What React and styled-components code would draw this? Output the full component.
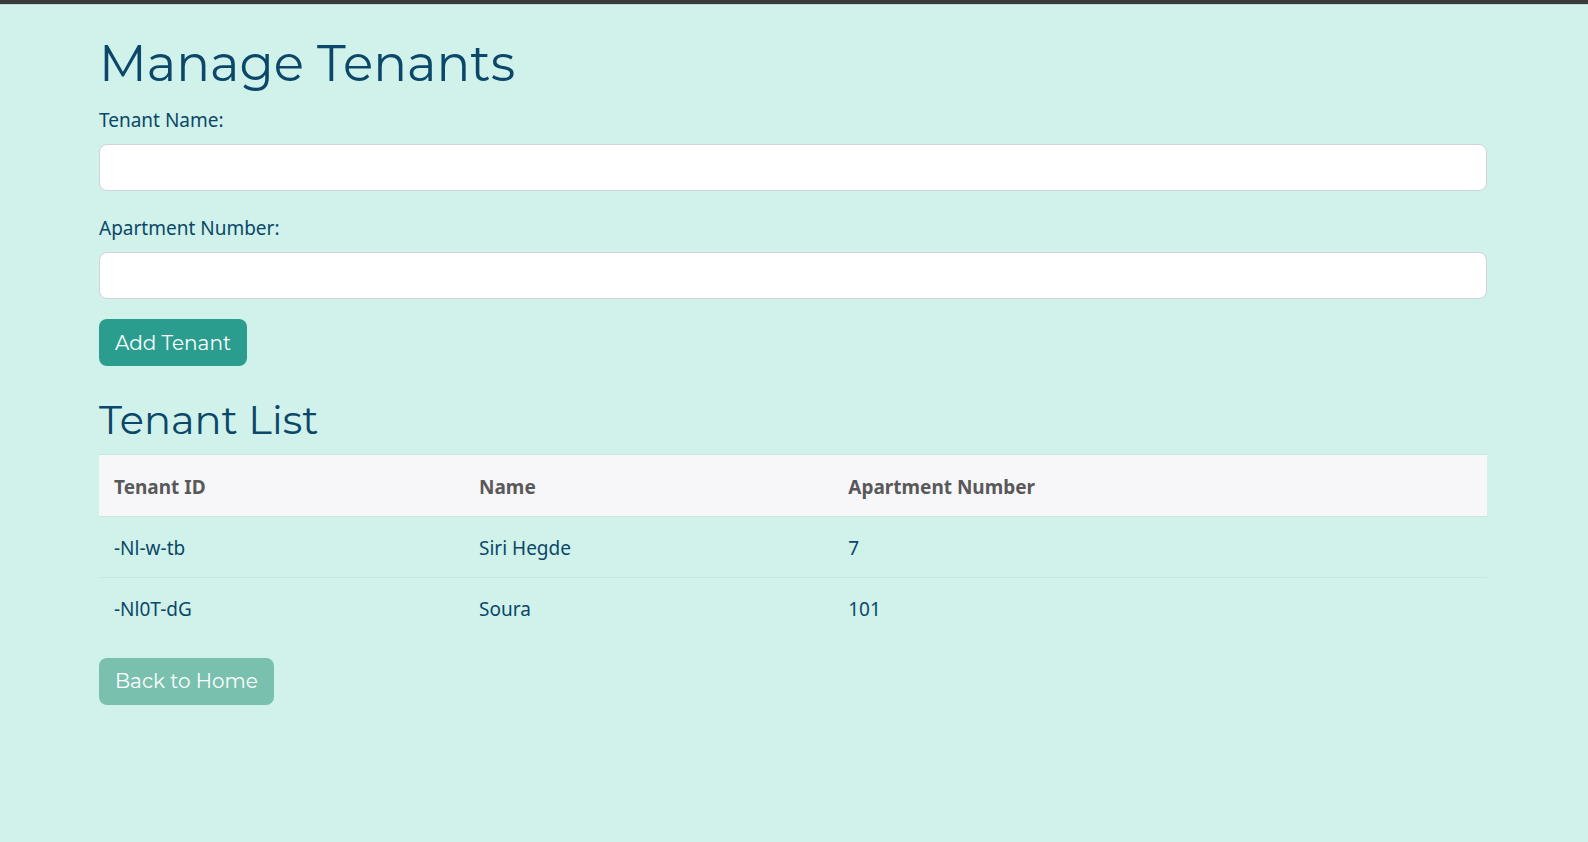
import React, { useState } from "react";
import styled, { createGlobalStyle } from "styled-components";

const GlobalStyle = createGlobalStyle`
  *, *::before, *::after { box-sizing: border-box; }
  body {
    margin: 0;
    background: #d0f2ea;
    color: #0b4769;
    font-family: "Segoe UI", "Noto Sans", sans-serif;
    font-size: 19px;
    line-height: 30px;
  }
`;

const Page = styled.div`
  min-height: 100vh;
  border-top: 4px solid #3b3b3b;
`;

const Content = styled.main`
  border-top: 1px solid #bbdad2;
  padding: 28px 101px 40px 99px;
`;

const Title = styled.h1`
  margin: 0 0 10px;
  font-family: Montserrat, Inter, sans-serif;
  font-size: 50px;
  font-weight: 400;
  line-height: 62px;
`;

const Subtitle = styled.h2`
  margin: 29px 0 9px;
  font-family: Montserrat, Inter, sans-serif;
  font-size: 40px;
  font-weight: 400;
  line-height: 50px;
`;

const Fields = styled.div`
  display: flex;
  flex-direction: column;
  gap: 22px;
  margin-bottom: 20px;
`;

const Field = styled.div`
  display: flex;
  flex-direction: column;
  gap: 9px;
`;

const Input = styled.input`
  width: 100%;
  height: 47px;
  padding: 8px 15px;
  border: 1px solid #ced4da;
  border-radius: 8px;
  background: #fff;
  color: #495057;
  font: inherit;
`;

const Button = styled.button`
  height: 47px;
  padding: 0 16px;
  border: 0;
  border-radius: 8px;
  background: ${(p) => (p.$muted ? "#79c1ae" : "#2a9d8f")};
  color: #fff;
  font-family: Montserrat, Inter, sans-serif;
  font-size: 20px;
  line-height: 30px;
  cursor: pointer;
`;

const Table = styled.table`
  width: 100%;
  margin-bottom: 19px;
  border-collapse: collapse;
  table-layout: fixed;
`;

const HeadCell = styled.th`
  width: ${(p) => p.$width};
  height: 62px;
  padding: 2px 15px 0;
  border-top: 1px solid #c7e7e0;
  border-bottom: 1px solid #c7e7e0;
  background: #f7f7fa;
  color: #595959;
  font-weight: 700;
  text-align: left;
`;

const Cell = styled.td`
  height: 61px;
  padding: 2px 15px 0;
  border-top: 1px solid #c7e7e0;
`;

const columns = [
  { label: "Tenant ID", width: "26.3%" },
  { label: "Name", width: "26.6%" },
  { label: "Apartment Number", width: "auto" },
];

const initialTenants = [
  { id: "-Nl-w-tb", name: "Siri Hegde", apartment: "7" },
  { id: "-Nl0T-dG", name: "Soura", apartment: "101" },
];

export default function App() {
  const [tenants, setTenants] = useState(initialTenants);
  const [name, setName] = useState("");
  const [apartment, setApartment] = useState("");

  const addTenant = (event) => {
    event.preventDefault();
    if (!name || !apartment) return;
    setTenants([...tenants, { id: `-N${tenants.length}`, name, apartment }]);
    setName("");
    setApartment("");
  };

  return (
    <Page>
      <GlobalStyle />
      <Content>
        <Title>Manage Tenants</Title>
        <form onSubmit={addTenant}>
          <Fields>
            <Field>
              <label htmlFor="tenant-name">Tenant Name:</label>
              <Input id="tenant-name" value={name} onChange={(e) => setName(e.target.value)} />
            </Field>
            <Field>
              <label htmlFor="apartment-number">Apartment Number:</label>
              <Input
                id="apartment-number"
                value={apartment}
                onChange={(e) => setApartment(e.target.value)}
              />
            </Field>
          </Fields>
          <Button type="submit">Add Tenant</Button>
        </form>
        <Subtitle>Tenant List</Subtitle>
        <Table>
          <thead>
            <tr>
              {columns.map((c) => (
                <HeadCell key={c.label} scope="col" $width={c.width}>
                  {c.label}
                </HeadCell>
              ))}
            </tr>
          </thead>
          <tbody>
            {tenants.map((t) => (
              <tr key={t.id}>
                <Cell>{t.id}</Cell>
                <Cell>{t.name}</Cell>
                <Cell>{t.apartment}</Cell>
              </tr>
            ))}
          </tbody>
        </Table>
        <Button type="button" $muted>
          Back to Home
        </Button>
      </Content>
    </Page>
  );
}
